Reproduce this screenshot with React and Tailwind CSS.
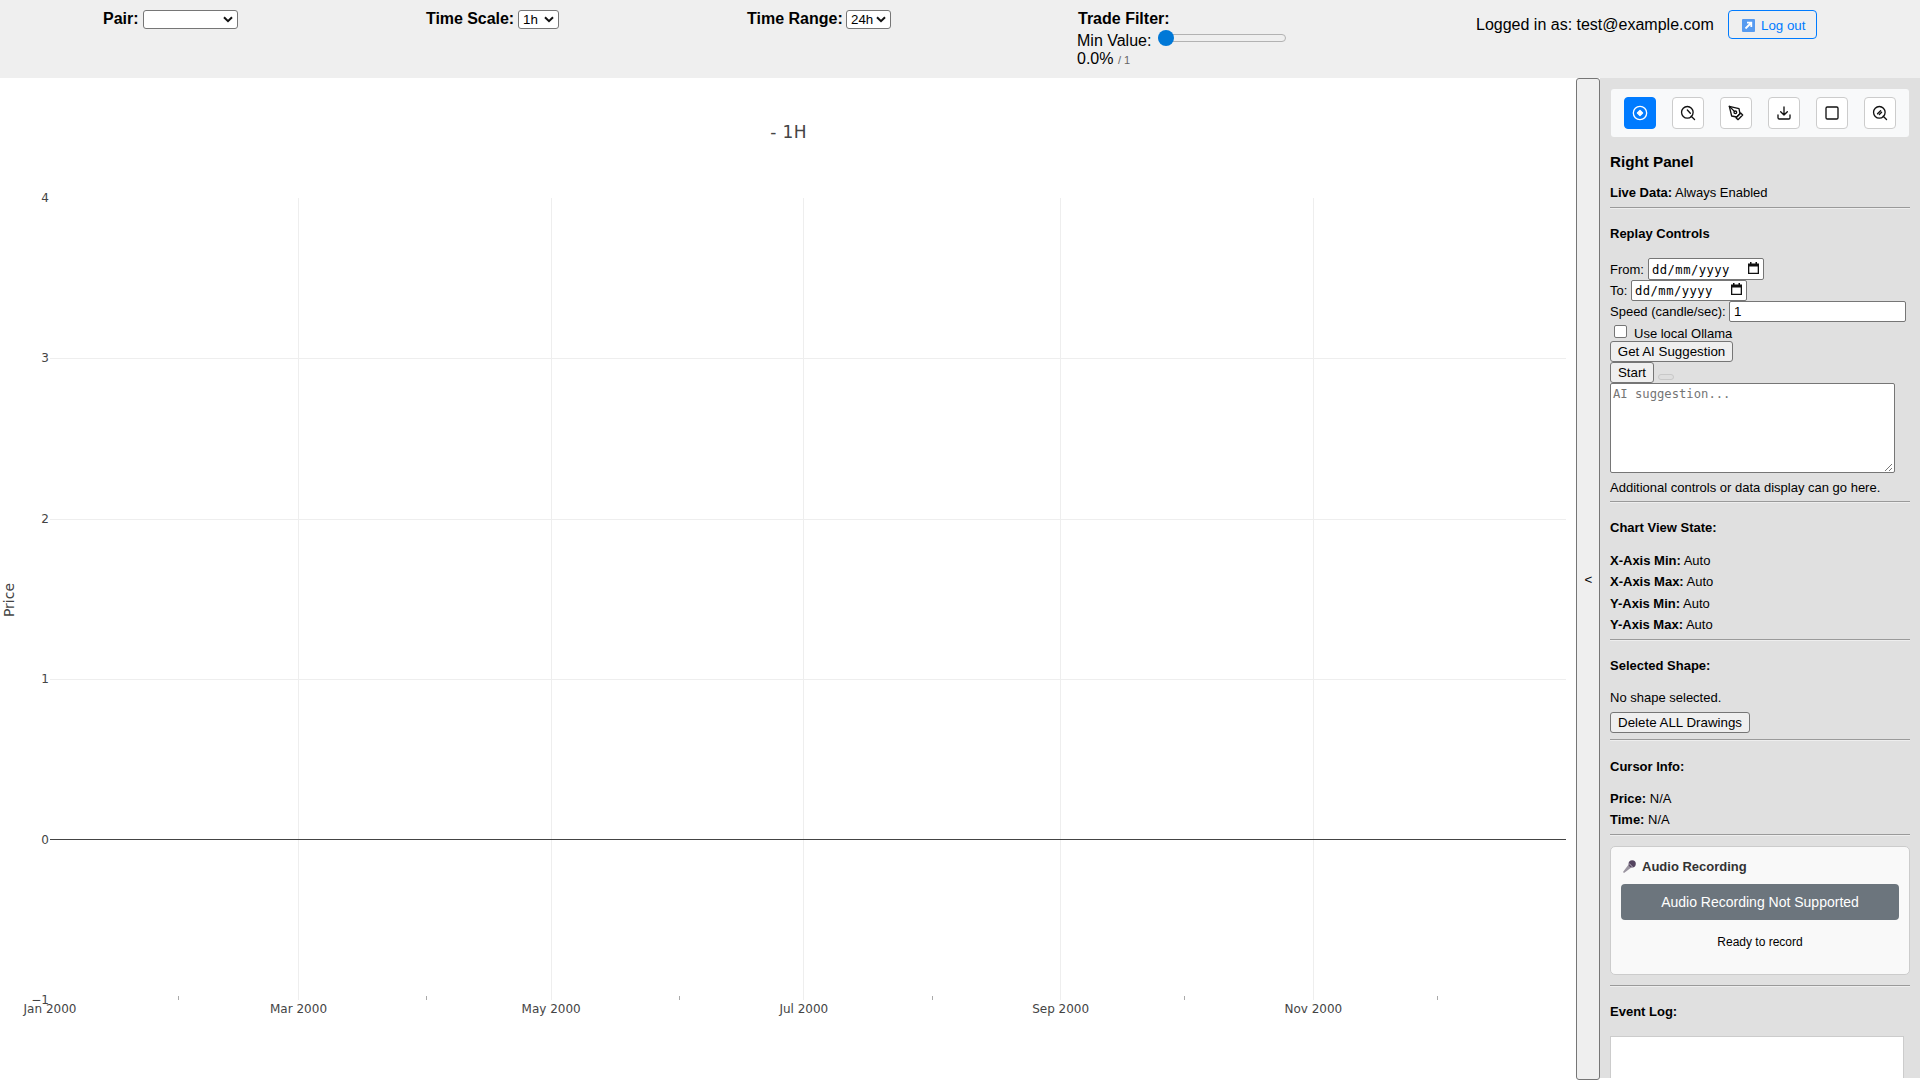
import React from "react";

const DAY = 1516 / 366;
const major = [
  [0, "Jan 2000"],
  [60, "Mar 2000"],
  [121, "May 2000"],
  [182, "Jul 2000"],
  [244, "Sep 2000"],
  [305, "Nov 2000"],
];
const minor = [31, 91, 152, 213, 274, 335];
const levels = [4, 3, 2, 1, 0, -1];

function Chart() {
  const x = (d) => Math.round(50 + d * DAY - 0.6) + 0.5;
  const y = (v) => 839.5 - 78 - v * 160.4;
  return (
    <svg
      width="1576"
      height="1002"
      className="block bg-white font-['DejaVu_Sans',sans-serif]"
      fill="#444"
      fontSize="12"
    >
      {major.slice(1).map(([d]) => (
        <line key={d} x1={x(d)} x2={x(d)} y1="120" y2="922" stroke="#eee" />
      ))}
      {levels.slice(1, 4).map((v) => (
        <line key={v} x1="50" x2="1566" y1={Math.round(y(v)) + 0.5} y2={Math.round(y(v)) + 0.5} stroke="#eee" />
      ))}
      <line x1="50" x2="1566" y1="761.5" y2="761.5" stroke="#444" />
      {minor.map((d) => (
        <line key={d} x1={x(d)} x2={x(d)} y1="918" y2="922" stroke="#aaa" />
      ))}
      {levels.map((v) => (
        <text key={v} x="49" y={y(v) + 4} textAnchor="end">
          {String(v).replace("-", "−")}
        </text>
      ))}
      {major.map(([d, t]) => (
        <text key={t} x={50 + d * DAY} y="935" textAnchor="middle">
          {t}
        </text>
      ))}
      <text x="788.5" y="60" textAnchor="middle" fontSize="17" letterSpacing="0.4">
        - 1H
      </text>
      <text transform="translate(14 522) rotate(-90)" textAnchor="middle" fontSize="14">
        Price
      </text>
    </svg>
  );
}

function Select({ value, className }) {
  return (
    <span className={"flex h-[19px] shrink-0 items-center justify-between rounded-[3px] border border-[#767676] bg-white pr-[4px] pl-[4px] text-[13.33px] leading-none " + className}>
      <span>{value}</span>
      <svg width="10" height="7" viewBox="0 0 10 7" fill="none" stroke="#111" strokeWidth="2">
        <path d="M1 1.2 5 5.2 9 1.2" />
      </svg>
    </span>
  );
}

function Header() {
  return (
    <header className="flex h-[78px] bg-[#efefef] text-[16px] leading-[18px]">
      <div className="flex w-[323px] pt-[10px] pl-[103px]">
        <b className="w-[40px] whitespace-nowrap">Pair:</b>
        <Select value="" className="w-[95px]" />
      </div>
      <div className="flex w-[321px] pt-[10px] pl-[103px]">
        <b className="w-[92px] tracking-[-0.05px] whitespace-nowrap">Time Scale:</b>
        <Select value="1h" className="w-[41px]" />
      </div>
      <div className="flex w-[331px] pt-[10px] pl-[103px]">
        <b className="w-[99px] whitespace-nowrap">Time Range:</b>
        <Select value="24h" className="w-[45px]" />
      </div>
      <div className="w-[501px] pt-[10px] pl-[102px]">
        <b className="block pl-[1px]">Trade Filter:</b>
        <div className="mt-[3px] flex h-[18px] leading-[20px]">
          <span className="w-[81px] whitespace-nowrap">Min Value:</span>
          <span className="mt-[3px] flex h-[8px] w-[128px] items-center rounded-full border border-[#b2b2b2] bg-[#efefef]">
            <span className="-ml-px size-[16px] shrink-0 rounded-full bg-[#0078d7]" />
          </span>
        </div>
        <div className="leading-[20px] whitespace-nowrap">
          0.0% <span className="text-[11px] text-[#666]">/ 1</span>
        </div>
      </div>
      <div className="flex h-[48px] items-center gap-[14px]">
        <span className="w-[238px] pt-[2px] whitespace-nowrap">Logged in as: test@example.com</span>
        <button className="mt-px flex h-[29px] w-[89px] items-center rounded-[4px] border border-[#007bff] pl-[13px] text-[13.33px] text-[#007bff]">
          <svg width="13" height="13" viewBox="0 0 13 13" className="mt-[2px] mr-[6px]">
            <rect width="13" height="13" rx="1" fill="#579bf0" />
            <path d="M3.5 9.5 8.5 4.5M5 3.7h4.3V8" fill="none" stroke="#fff" strokeWidth="1.8" />
          </svg>
          <span className="pt-[2px]">Log out</span>
        </button>
      </div>
    </header>
  );
}

const icons = [
  <>
    <circle cx="12" cy="12" r="10" />
    <path d="M12 8.2 15.8 12 12 15.8 8.2 12Z" fill="currentColor" />
  </>,
  <>
    <circle cx="11" cy="11" r="8.7" />
    <path d="m11 7.5 4.5 4.8M16.8 16.8l5 5" />
  </>,
  <>
    <path d="m12 19 7-7 3 3-7 7-3-3z" />
    <path d="m18 13-1.5-7.5L2 2l3.5 14.5L13 18l5-5z" />
    <path d="m2 2 7.586 7.586" />
    <circle cx="11" cy="11" r="2" />
  </>,
  <>
    <path d="M21 15v4a2 2 0 0 1-2 2H5a2 2 0 0 1-2-2v-4" />
    <path d="m7 10 5 5 5-5M12 15V3" />
  </>,
  <rect x="3" y="3" width="18" height="18" rx="2" />,
  <>
    <circle cx="11" cy="11" r="8.7" />
    <path d="m16.8 16.8 5 5M8.3 13.2l4.6-4.6M11 14.3l3.4-3.4" />
  </>,
];

function Field({ children, className }) {
  return <span className={"flex items-center rounded-[2px] border border-[#767676] bg-white " + className}>{children}</span>;
}

function DateField({ className }) {
  return (
    <Field className={"w-[116px] justify-between pr-[4px] pl-[3px] font-['DejaVu_Sans_Mono',monospace] text-[12.2px] text-black " + className}>
      <span className="pt-[2px] tracking-[0.45px] whitespace-nowrap">dd/mm/yyyy</span>
      <svg width="11" height="12" viewBox="0 0 11 12" className="mb-[3px]">
        <path d="M2 0h1.5v1.5h4V0H9v1.5h2V12H0V1.5h2zM1.3 4.5v6.2h8.4V4.5z" fill="#111" fillRule="evenodd" />
      </svg>
    </Field>
  );
}

function Btn({ children, className }) {
  return (
    <button className={"block h-[21px] rounded-[3px] border border-[#767676] bg-[#efefef] text-center text-[13.33px] leading-[18px] whitespace-nowrap " + className}>
      {children}
    </button>
  );
}

const Rule = ({ className }) => <div className={"h-[2px] border-t border-b border-t-[#9a9a9a] border-b-[#eee] " + className} />;

const Heading = ({ children, className }) => <h4 className={"h-[20px] leading-[22px] font-bold " + className}>{children}</h4>;

function Row({ label, value, className }) {
  return (
    <div className={"h-[20px] leading-[22px] " + className}>
      <b>{label}</b> {value}
    </div>
  );
}

function SidePanel() {
  return (
    <aside className="h-[1000px] w-[320px] overflow-hidden bg-[#e0e0e0] px-[10px] pt-[11px] text-[13px] whitespace-nowrap text-black">
      <div className="ml-px flex h-[48px] w-[298px] gap-[16px] rounded-[3px] bg-[#f8f9fa] py-[8px] pl-[13px]">
        {icons.map((d, i) => (
          <button
            key={i}
            className={
              "flex size-[32px] items-center justify-center rounded-[4px] border " +
              (i === 0 ? "border-[#007bff] bg-[#007bff] text-white" : "border-[#ccc] bg-white text-[#111]")
            }
          >
            <svg width="16" height="16" viewBox="0 0 24 24" fill="none" stroke="currentColor" strokeWidth="2" strokeLinecap="round" strokeLinejoin="round">
              {d}
            </svg>
          </button>
        ))}
      </div>
      <h3 className="mt-[15px] text-[15.2px] leading-[20px] font-bold">Right Panel</h3>
      <Row label="Live Data:" value="Always Enabled" className="mt-[10px]" />
      <Rule className="mt-[5px]" />
      <Heading className="mt-[14px]">Replay Controls</Heading>
      <div className="mt-[15px] flex h-[22px] items-center">
        <span className="w-[38px] pt-[2px]">From:</span>
        <DateField className="h-[22px]" />
      </div>
      <div className="flex h-[21px] items-center">
        <span className="w-[21px]">To:</span>
        <DateField className="h-[21px]" />
      </div>
      <div className="flex h-[21px] items-center">
        <span className="w-[119px]">Speed (candle/sec):</span>
        <Field className="h-[21px] w-[177px] pl-[4px] text-[13.33px]">1</Field>
      </div>
      <div className="flex h-[19px] pl-[4px] leading-[24px]">
        <span className="mt-[3px] mr-[7px] size-[13px] rounded-[2px] border border-[#767676] bg-white" />
        Use local Ollama
      </div>
      <Btn className="w-[123px]">Get AI Suggestion</Btn>
      <div className="flex h-[21px]">
        <Btn className="w-[44px]">Start</Btn>
        <span className="mt-[12px] ml-[4px] h-[6px] w-[16px] rounded-[3px] border border-[#c8c8c8] bg-[#dedede]" />
      </div>
      <div className="flex h-[90px] w-[285px] justify-between rounded-[2px] border border-[#767676] bg-white pl-[2px]">
        <span className="pt-[2px] font-['DejaVu_Sans_Mono',monospace] text-[12.2px] leading-[16px] text-[#757575]">AI suggestion...</span>
        <svg width="9" height="9" viewBox="0 0 9 9" className="mr-px self-end" stroke="#777" strokeWidth="1">
          <path d="M1 8 8 1M5 8 8 5" />
        </svg>
      </div>
      <p className="mt-[5px] leading-[20px]">Additional controls or data display can go here.</p>
      <Rule className="mt-[3px]" />
      <Heading className="mt-[14px]">Chart View State:</Heading>
      <Row label="X-Axis Min:" value="Auto" className="mt-[13px]" />
      <Row label="X-Axis Max:" value="Auto" className="mt-[1px]" />
      <Row label="Y-Axis Min:" value="Auto" className="mt-[2px]" />
      <Row label="Y-Axis Max:" value="Auto" className="mt-[1px]" />
      <Rule className="mt-[5px]" />
      <Heading className="mt-[14px]">Selected Shape:</Heading>
      <p className="mt-[12px] h-[20px] leading-[22px]">No shape selected.</p>
      <Btn className="mt-[5px] w-[140px]">Delete ALL Drawings</Btn>
      <Rule className="mt-[6px]" />
      <Heading className="mt-[15px]">Cursor Info:</Heading>
      <Row label="Price:" value="N/A" className="mt-[12px]" />
      <Row label="Time:" value="N/A" className="mt-[1px]" />
      <Rule className="mt-[5px]" />
      <section className="mt-[10px] h-[129px] w-[300px] rounded-[5px] border border-[#ccc] bg-[#f9f9f9] px-[10px] pt-[9px]">
        <h4 className="flex h-[20px] items-center pl-[2px] leading-[20px] font-bold text-[#333]">
          <svg width="13" height="13" viewBox="0 0 13 13" className="mr-[6px]">
            <path d="M0 12 6 4l3 3L1 13Z" fill="#9a94a0" />
            <circle cx="9.2" cy="3.8" r="3.6" fill="#54445f" />
            <path d="m6 3.4 3.6 3.7" stroke="#b9b2c0" strokeWidth="1" />
          </svg>
          <span className="pt-[2px]">Audio Recording</span>
        </h4>
        <button className="mt-[8px] block h-[36px] w-[278px] rounded-[4px] bg-[#6c757d] text-center text-[14px] leading-[36px] text-white">
          Audio Recording Not Supported
        </button>
        <p className="mt-[11px] text-center text-[12px] leading-[22px]">Ready to record</p>
      </section>
      <Rule className="mt-[10px]" />
      <Heading className="mt-[14px]">Event Log:</Heading>
      <div className="mt-[15px] h-[150px] w-[294px] border border-[#ccc] bg-white" />
    </aside>
  );
}

export default function App() {
  return (
    <div className="h-[1080px] w-[1920px] overflow-hidden bg-white font-['Liberation_Sans',Arial,sans-serif] text-black">
      <Header />
      <main className="flex h-[1002px]">
        <Chart />
        <button className="h-[1002px] w-[24px] rounded-[3px] border border-[#767676] bg-[#efefef] pt-[2px] pl-px text-[13.33px]">&lt;</button>
        <SidePanel />
      </main>
    </div>
  );
}
